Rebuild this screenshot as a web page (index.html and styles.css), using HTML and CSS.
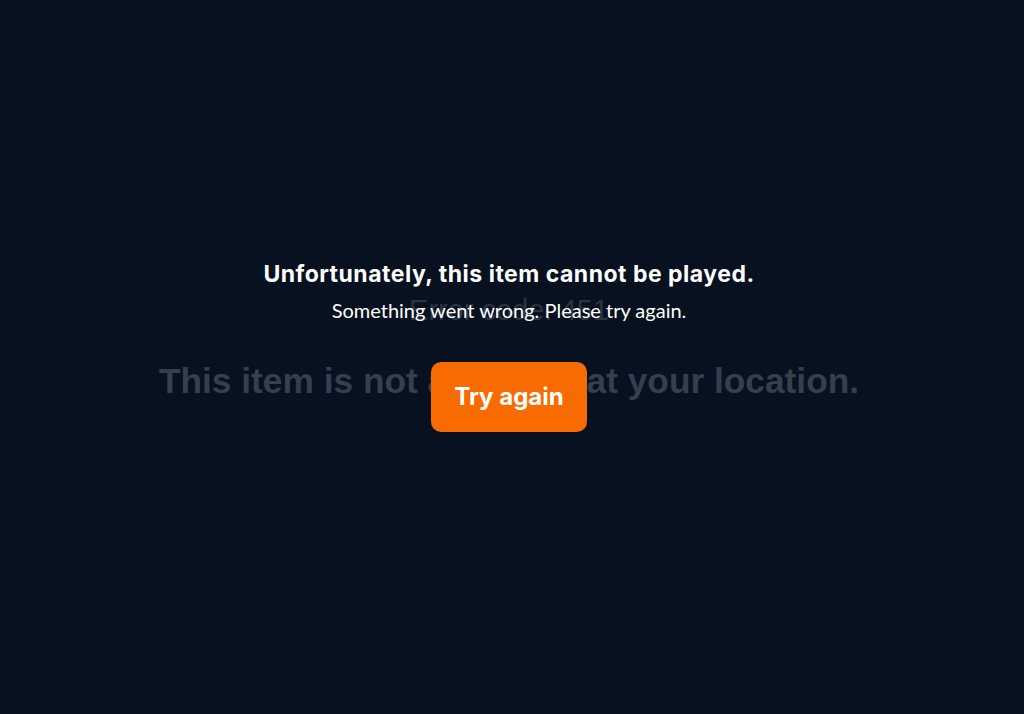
FILE: index.html
```html
<!DOCTYPE html>
<html lang="en">
<head>
<meta charset="utf-8">
<title>Error</title>
<link rel="stylesheet" href="styles.css">
</head>
<body>
<main class="stage">
  <section class="error-layer">
    <p class="error-code">Error code: 451</p>
    <p class="error-message">This item is not available at your location.</p>
  </section>
  <section class="overlay">
    <h1 class="title">Unfortunately, this item cannot be played.</h1>
    <p class="subtitle">Something went wrong. Please try again.</p>
    <button class="retry" type="button">Try again</button>
  </section>
</main>
</body>
</html>
```

FILE: styles.css
```css
html, body {
  margin: 0;
  height: 100%;
}
body {
  background: #07111f;
  font-family: "Lato", "Noto Sans", sans-serif;
}
.stage {
  height: 100%;
  box-sizing: border-box;
  padding-right: 6px;
  display: grid;
  place-items: center;
}
.error-layer, .overlay {
  grid-area: 1 / 1;
  display: flex;
  flex-direction: column;
  align-items: center;
  text-align: center;
}
.error-layer {
  padding-bottom: 19px;
}
.error-code {
  margin: 0;
  font-family: "Liberation Sans", Arial, sans-serif;
  font-weight: 300;
  font-size: 29px;
  line-height: 32px;
  color: #2a3443;
}
.error-message {
  margin: 35px 0 0;
  font-family: "Liberation Sans", Arial, sans-serif;
  font-weight: 700;
  font-size: 35.3px;
  line-height: 40px;
  color: #363f4d;
}
.overlay {
  padding-bottom: 22px;
}
.title {
  margin: 0;
  font-family: "Inter", "Noto Sans", sans-serif;
  font-size: 23px;
  letter-spacing: 0.5px;
  line-height: 28px;
  font-weight: 700;
  color: #ffffff;
}
.subtitle {
  margin: 10px 0 0;
  font-size: 20px;
  line-height: 24px;
  font-weight: 400;
  color: #ffffff;
}
.retry {
  margin-top: 40px;
  width: 156px;
  height: 70px;
  border: 0;
  border-radius: 10px;
  background: #f76b00;
  color: #ffffff;
  font-family: "Inter", "Noto Sans", sans-serif;
  font-weight: 700;
  font-size: 24px;
  padding-bottom: 2px;
}
```
